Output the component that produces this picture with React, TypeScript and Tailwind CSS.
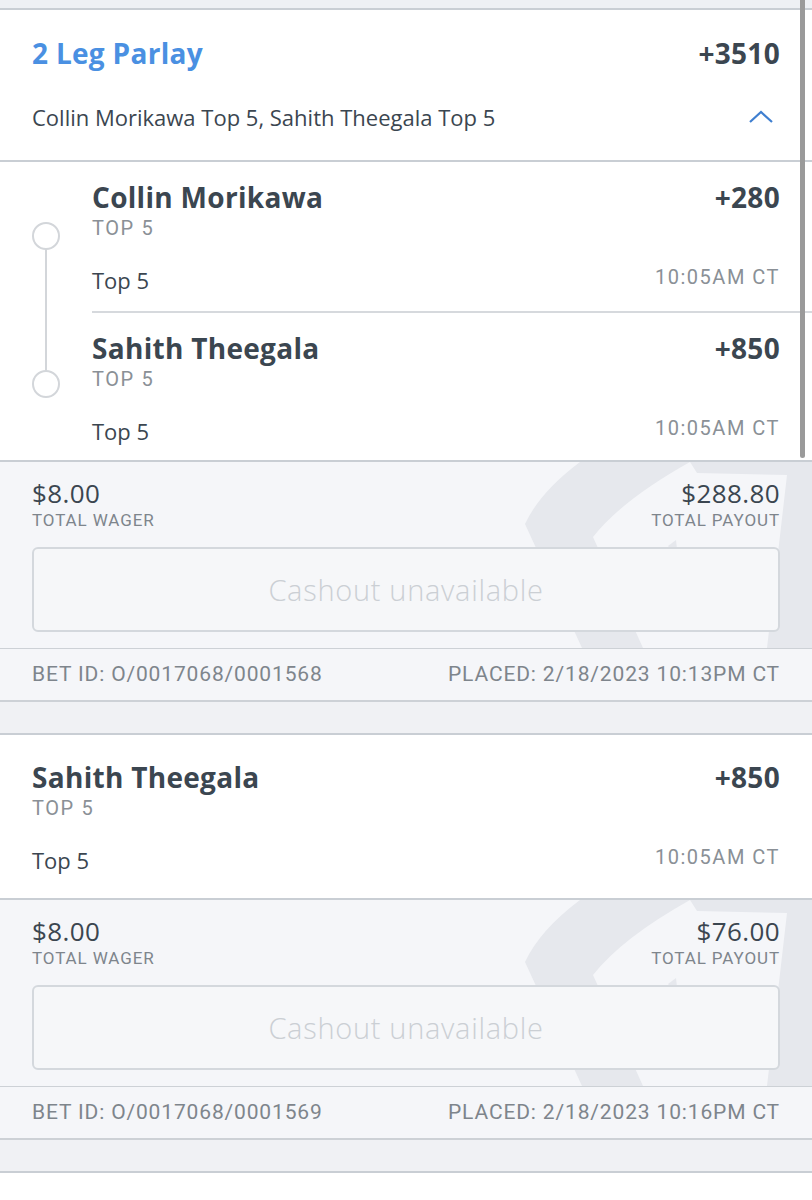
import React from "react";

const main = { fontFamily: "'Open Sans', Lato, sans-serif" };
const cond = { fontFamily: "Roboto, 'Liberation Sans', sans-serif" };

function Watermark() {
  return (
    <svg
      className="pointer-events-none absolute inset-0 h-full w-full"
      viewBox="0 0 812 186"
      preserveAspectRatio="none"
    >
      <path d="M580 0 L690 0 Q622 38 593 75 L643 186 L582 186 L525 62 Q540 30 580 0 Z" fill="#e6e8ed" />
      <path d="M690 0 L812 0 L812 186 L767 186 L787 13 L697 11 Z" fill="#e6e8ed" />
      <path d="M668 84 L676 78 L678 96 Z" fill="#e6e8ed" />
    </svg>
  );
}

function Totals({ payout, betId, placed }: { payout: string; betId: string; placed: string }) {
  return (
    <>
      <div className="relative overflow-hidden bg-[#f5f6f9] border-b border-[#cdd1d6]">
        <Watermark />
        <div className="relative px-[32px] pt-[16px] pb-[16px]">
          <div className="flex justify-between items-start">
            <div>
              <div className="text-[26px] leading-[30px] text-[#3b4650] tracking-[0.4px]" style={main}>$8.00</div>
              <div className="mt-[1px] text-[17px] leading-[22px] tracking-[0.9px] text-[#7e858c]" style={cond}>TOTAL WAGER</div>
            </div>
            <div className="text-right">
              <div className="text-[26px] leading-[30px] text-[#3b4650] tracking-[0.4px]" style={main}>{payout}</div>
              <div className="mt-[1px] text-[17px] leading-[22px] tracking-[0.9px] text-[#7e858c]" style={cond}>TOTAL PAYOUT</div>
            </div>
          </div>
          <div className="mt-[16px] h-[85px] rounded-[6px] border-2 border-[#d4d8dd] bg-[#f6f7f9] flex items-center justify-center">
            <span className="text-[29px] text-[#cbcfd4] font-light tracking-[0.7px]" style={main}>Cashout unavailable</span>
          </div>
        </div>
      </div>
      <div className="h-[53px] bg-[#f5f6f9] border-b-2 border-[#cdd1d6] px-[32px] flex items-center justify-between text-[21px] tracking-[0.85px] text-[#7e858c]" style={cond}>
        <span>BET ID: {betId}</span>
        <span>PLACED: {placed}</span>
      </div>
    </>
  );
}

function LegText({ name, odds }: { name: string; odds: string }) {
  return (
    <>
      <div className="flex justify-between items-center">
        <span className="text-[28px] leading-[34px] font-bold text-[#3b4650] tracking-[0.3px]" style={main}>{name}</span>
        <span className="text-[28px] leading-[34px] font-bold text-[#3b4650] tracking-[0.3px]" style={main}>{odds}</span>
      </div>
      <div className="mt-[2px] text-[20px] leading-[24px] tracking-[1.6px] text-[#8a9096]" style={cond}>TOP 5</div>
      <div className="mt-[28px] flex justify-between items-center">
        <span className="text-[22px] leading-[24px] text-[#3b4650]" style={main}>Top 5</span>
        <span className="text-[20px] leading-[24px] tracking-[1.5px] text-[#8a9096] -mt-[6px]" style={cond}>10:05AM CT</span>
      </div>
    </>
  );
}

export default function App() {
  return (
    <div className="relative min-h-[1200px] bg-white">
      <div className="h-[10px] bg-[#eef0f4] border-b-2 border-[#c9ced4]" />

      {/* parlay header */}
      <div className="bg-white border-b-2 border-[#c9ced4] px-[32px] pt-[26px] pb-[31px]">
        <div className="flex justify-between items-center">
          <span className="text-[28px] leading-[34px] font-bold text-[#4a90e2] tracking-[0.3px]" style={main}>2 Leg Parlay</span>
          <span className="text-[28px] leading-[34px] font-bold text-[#3b4650] tracking-[0.3px]" style={main}>+3510</span>
        </div>
        <div className="mt-[35px] flex justify-between items-center">
          <span className="text-[22px] leading-[24px] text-[#3b4650]" style={main}>
            Collin Morikawa Top 5, Sahith Theegala Top 5
          </span>
          <svg width="26" height="16" viewBox="0 0 26 16" className="mr-[6px]">
            <path d="M2 13 L13 3 L24 13" fill="none" stroke="#3f7fd0" strokeWidth="2.2" />
          </svg>
        </div>
      </div>

      {/* legs */}
      <div className="flex bg-white border-b-2 border-[#c9ced4]">
        <div className="w-[92px] shrink-0">
          <svg width="92" height="298" viewBox="0 0 92 298">
            <line x1="46" y1="87" x2="46" y2="209" stroke="#d3d6da" strokeWidth="2" />
            <circle cx="46" cy="74" r="13" fill="white" stroke="#d3d6da" strokeWidth="2" />
            <circle cx="46" cy="222" r="13" fill="white" stroke="#d3d6da" strokeWidth="2" />
          </svg>
        </div>
        <div className="flex-1">
          <div className="pr-[32px] pt-[18px] pb-[19px] border-b-2 border-[#d6d9dd]">
            <LegText name="Collin Morikawa" odds="+280" />
          </div>
          <div className="pr-[32px] pt-[18px] pb-[17px]">
            <LegText name="Sahith Theegala" odds="+850" />
          </div>
        </div>
      </div>

      <Totals payout="$288.80" betId="O/0017068/0001568" placed="2/18/2023 10:13PM CT" />

      <div className="h-[33px] bg-[#f0f1f4] border-b-2 border-[#c9ced4]" />

      {/* single */}
      <div className="bg-white border-b-2 border-[#c9ced4] px-[32px] pt-[25px] pb-[26px]">
        <LegText name="Sahith Theegala" odds="+850" />
      </div>

      <Totals payout="$76.00" betId="O/0017068/0001569" placed="2/18/2023 10:16PM CT" />

      <div className="h-[33px] bg-[#f0f1f4] border-b-2 border-[#c9ced4]" />

      {/* scroll indicator */}
      <div className="absolute left-[800px] top-0 h-[458px] w-[5px] rounded-b-full bg-[#9a9a9a]" />
    </div>
  );
}
